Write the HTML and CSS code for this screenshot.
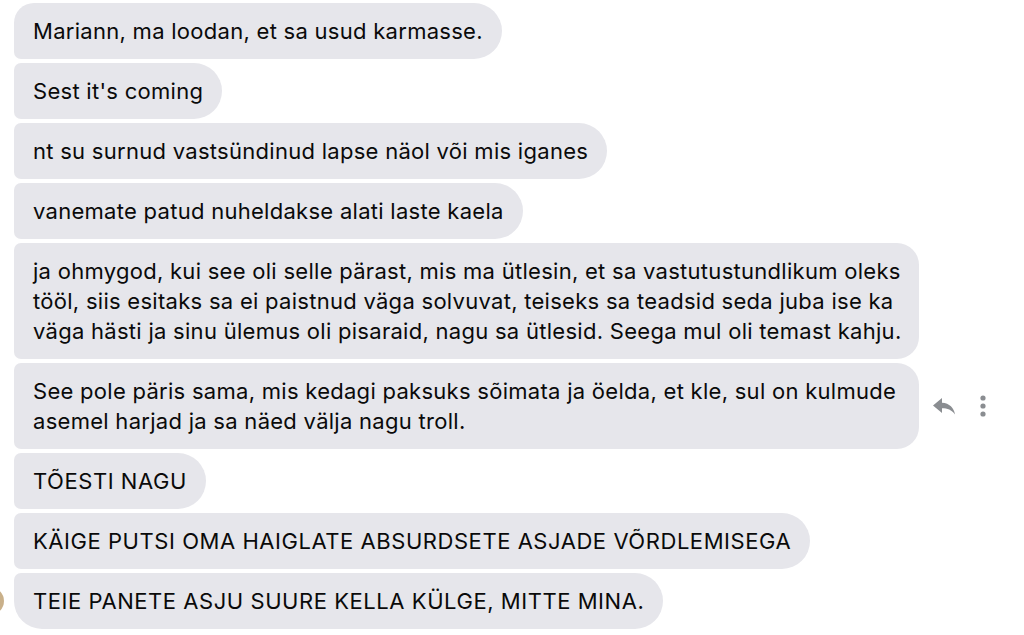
FILE: index.html
```html
<!DOCTYPE html>
<html lang="et">
<head>
  <meta charset="UTF-8">
  <meta name="viewport" content="width=device-width, initial-scale=1.0">
  <title>Vestlus</title>
  <link rel="stylesheet" href="styles.css">
</head>
<body>

  <div class="thread">
    <div class="row">
      <div class="bubble first">Mariann, ma loodan, et sa usud karmasse.</div>
    </div>
    <div class="row">
      <div class="bubble">Sest it's coming</div>
    </div>
    <div class="row">
      <div class="bubble">nt su surnud vastsündinud lapse näol või mis iganes</div>
    </div>
    <div class="row">
      <div class="bubble">vanemate patud nuheldakse alati laste kaela</div>
    </div>
    <div class="row">
      <div class="bubble full">ja ohmygod, kui see oli selle pärast, mis ma ütlesin, et sa vastutustundlikum oleks<br>tööl, siis esitaks sa ei paistnud väga solvuvat, teiseks sa teadsid seda juba ise ka<br>väga hästi ja sinu ülemus oli pisaraid, nagu sa ütlesid. Seega mul oli temast kahju.</div>
    </div>
    <div class="row">
      <div class="bubble full">See pole päris sama, mis kedagi paksuks sõimata ja öelda, et kle, sul on kulmude<br>asemel harjad ja sa näed välja nagu troll.</div>
      <div class="actions">
        <!-- reply -->
        <svg class="icon-reply" width="26" height="20" viewBox="0 0 26 20">
          <path d="M11 2 L2 9.5 L11 17 V12.3 C16.5 12.3 20.5 13.8 24 18.5 C23 12 18.5 7.2 11 6.8 Z" fill="#8a8d91"/>
        </svg>
        <!-- more -->
        <svg class="icon-more" width="8" height="22" viewBox="0 0 8 22">
          <circle cx="4" cy="3" r="2.6" fill="#8a8d91"/>
          <circle cx="4" cy="11" r="2.6" fill="#8a8d91"/>
          <circle cx="4" cy="19" r="2.6" fill="#8a8d91"/>
        </svg>
      </div>
    </div>
    <div class="row">
      <div class="bubble caps">TÕESTI NAGU</div>
    </div>
    <div class="row">
      <div class="bubble caps">KÄIGE PUTSI OMA HAIGLATE ABSURDSETE ASJADE VÕRDLEMISEGA</div>
    </div>
    <div class="row">
      <div class="avatar"></div>
      <div class="bubble caps last">TEIE PANETE ASJU SUURE KELLA KÜLGE, MITTE MINA.</div>
    </div>
  </div>

</body>
</html>
```

FILE: styles.css
```css
/* General Styles */
body {
  margin: 0;
  background-color: #ffffff;
  font-family: 'Inter', 'Liberation Sans', Arial, sans-serif;
  color: #0a0a0a;
  overflow: hidden;
}

.thread {
  display: flex;
  flex-direction: column;
  gap: 4px;
  padding: 3px 0 0 14px;
}

.row {
  display: flex;
  align-items: center;
}

/* Bubbles */
.bubble {
  background-color: #e6e6eb;
  padding: 13px 19px;
  font-size: 22px;
  line-height: 30px;
  letter-spacing: 0.28px;
  border-radius: 7px 28px 28px 7px;
  white-space: nowrap;
}

.bubble.caps {
  letter-spacing: 0.55px;
}

.bubble.first {
  border-top-left-radius: 20px;
}

.bubble.full {
  width: 867px;
  border-radius: 7px 22px 22px 7px;
}

.bubble.last {
  border-bottom-left-radius: 28px;
}

.avatar {
  width: 28px;
  height: 28px;
  margin-left: -38px;
  margin-right: 10px;
  border-radius: 50%;
  background-color: #c9b08a;
  box-shadow: 0 0 0 2px #fff;
  align-self: center;
}

/* Hover actions */
.actions {
  display: flex;
  align-items: center;
  gap: 22px;
  margin-left: 12px;
}

.icon-reply {
  display: block;
}

.icon-more {
  display: block;
}
```
